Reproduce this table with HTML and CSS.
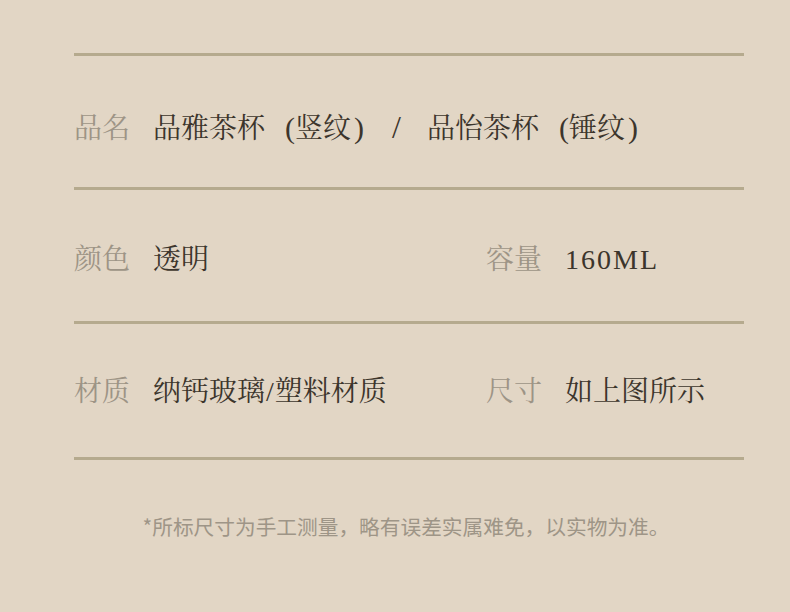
FILE: index.html
```html
<!DOCTYPE html>
<html lang="zh-CN">
<head>
<meta charset="utf-8">
<title>产品参数</title>
<link rel="stylesheet" href="styles.css">
</head>
<body>
<main class="page">
  <section class="spec">
    <div class="rule"></div>
    <div class="row row-first">
      <div class="item">
        <span class="label">品名</span>
        <span class="value">品雅茶杯<span class="po">(</span>竖纹<span class="pc">)</span><span class="slash">/</span>品怡茶杯<span class="po">(</span>锤纹<span class="pc">)</span></span>
      </div>
    </div>
    <div class="rule"></div>
    <div class="row row-second">
      <div class="item">
        <span class="label">颜色</span>
        <span class="value">透明</span>
      </div>
      <div class="item">
        <span class="label">容量</span>
        <span class="value latin">160ML</span>
      </div>
    </div>
    <div class="rule"></div>
    <div class="row row-third">
      <div class="item">
        <span class="label">材质</span>
        <span class="value">纳钙玻璃<span class="sep">/</span>塑料材质</span>
      </div>
      <div class="item">
        <span class="label">尺寸</span>
        <span class="value">如上图所示</span>
      </div>
    </div>
    <div class="rule"></div>
  </section>
  <p class="note">*所标尺寸为手工测量，略有误差实属难免，以实物为准。</p>
</main>
</body>
</html>
```

FILE: styles.css
```css
html, body {
  margin: 0;
  padding: 0;
}

body {
  background: #e2d6c5;
  width: 790px;
  height: 612px;
  overflow: hidden;
}

.page {
  padding-top: 53px;
}

.spec {
  margin-left: 74px;
  width: 670px;
}

.rule {
  height: 3px;
  background: #b5aa8e;
}

.row {
  display: grid;
  grid-template-columns: 412px 1fr;
  align-items: center;
  box-sizing: border-box;
  height: 131px;
  font-family: "Liberation Serif", "Noto Serif CJK SC", "Noto Sans CJK SC", serif;
  font-size: 28px;
  line-height: 1;
}

.row-first {
  grid-template-columns: 1fr;
  padding-top: 14px;
}

.row-second {
  padding-top: 8px;
}

.row-third {
  height: 133px;
  padding-top: 3px;
}

.item {
  display: flex;
  align-items: center;
}

.label {
  width: 79px;
  flex: none;
  color: #9d9486;
}

.value {
  color: #3c352c;
  white-space: nowrap;
}

.latin {
  letter-spacing: 2px;
}

.po,
.pc,
.slash {
  line-height: 0;
}

.po,
.pc {
  font-size: 30px;
}

.po {
  margin-left: 20px;
}

.pc {
  margin-left: 3px;
}

.slash {
  font-size: 32px;
  margin: 0 26px 0 28px;
}

.sep {
  margin: 0 1px;
}

.note {
  margin: 51px 0 0 0;
  padding-left: 22px;
  text-align: center;
  font-family: "Noto Sans CJK SC", sans-serif;
  font-size: 20.7px;
  line-height: 30px;
  color: #9e9587;
}
```
